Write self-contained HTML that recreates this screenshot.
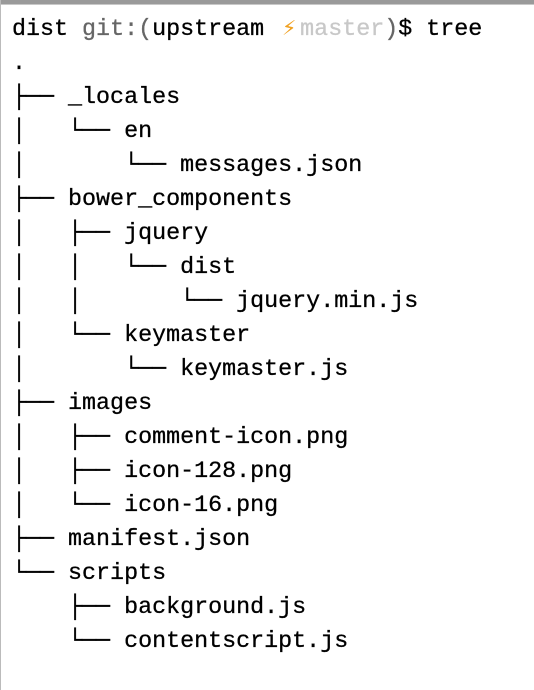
<!DOCTYPE html>
<html><head><meta charset="utf-8"><style>
html,body{margin:0;padding:0;background:#fff;width:534px;height:690px;overflow:hidden}
.top{position:absolute;left:0;top:0;width:534px;height:4px;background:#9a9a9a;border-bottom:1px solid #c8c8c8}
.left{position:absolute;left:0;top:0;width:1px;height:690px;background:#bbb}
pre{position:absolute;left:12px;top:13px;margin:0;font-family:"Liberation Mono","DejaVu Sans Mono",monospace;font-size:23.35px;line-height:34px;color:#000;-webkit-text-stroke:0.3px #000}
.g{color:#666;-webkit-text-stroke:0.3px #666}.l{color:#c8c8c8;-webkit-text-stroke:0.3px #c8c8c8}.y{color:#f0a020;display:inline-block;width:22px;text-align:center;-webkit-text-stroke:0}
</style></head><body>
<div class="top"></div><div class="left"></div>
<pre>dist <span class="g">git:(</span>upstream <span class="y">⚡</span><span class="l">master</span><span class="g">)</span>$ tree
.
├── _locales
│   └── en
│       └── messages.json
├── bower_components
│   ├── jquery
│   │   └── dist
│   │       └── jquery.min.js
│   └── keymaster
│       └── keymaster.js
├── images
│   ├── comment-icon.png
│   ├── icon-128.png
│   └── icon-16.png
├── manifest.json
└── scripts
    ├── background.js
    └── contentscript.js</pre>
</body></html>
